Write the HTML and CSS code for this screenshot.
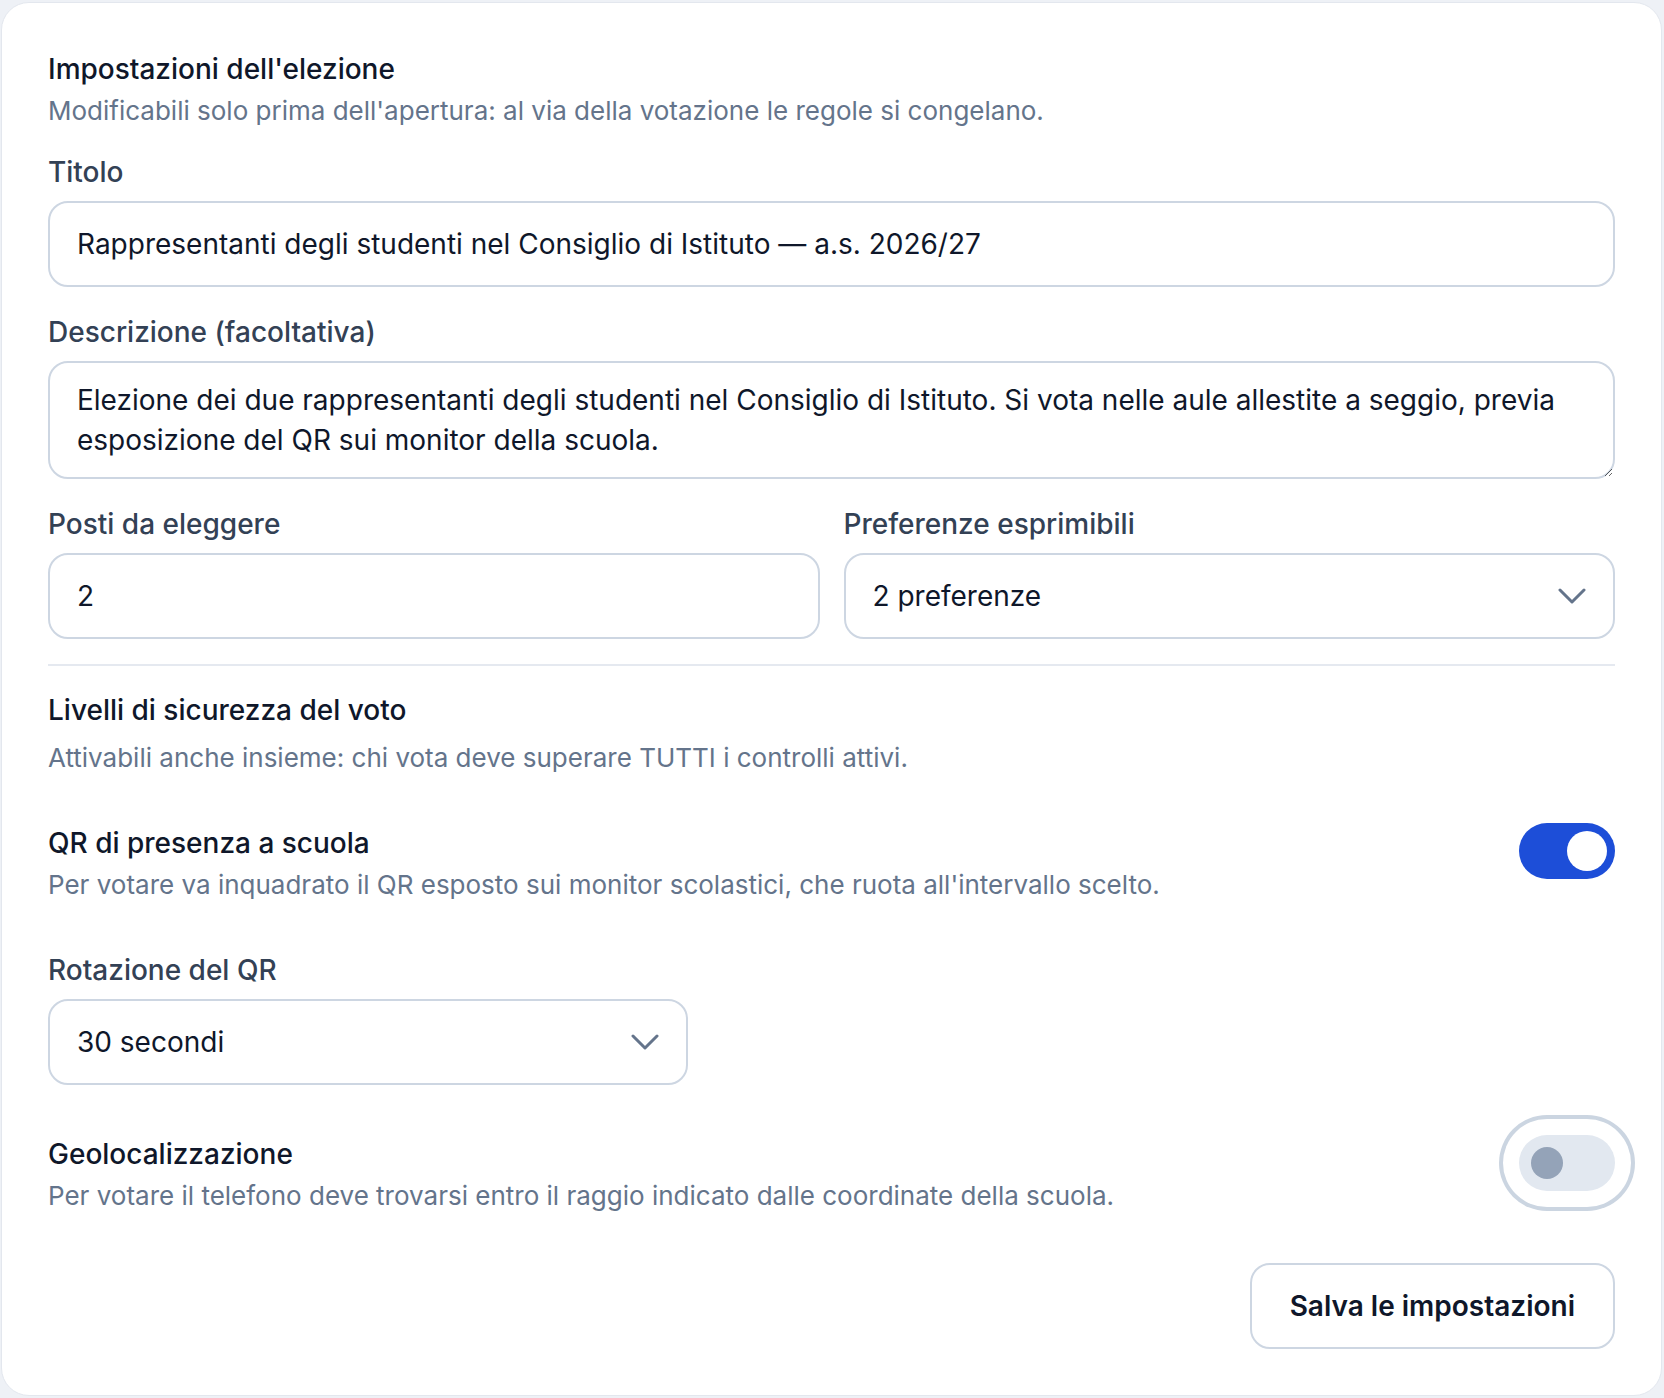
FILE: index.html
```html
<!DOCTYPE html>
<html lang="it">
<head>
<meta charset="utf-8">
<title>Impostazioni dell'elezione</title>
<link rel="stylesheet" href="styles.css">
</head>
<body>
<div class="card">
    <div class="intestazione">
        <h2>Impostazioni dell'elezione</h2>
        <p class="nota">Modificabili solo prima dell'apertura: al via della votazione le regole si congelano.</p>
    </div>

    <div class="campo">
        <label for="titolo">Titolo</label>
        <input id="titolo" class="controllo" type="text" value="Rappresentanti degli studenti nel Consiglio di Istituto — a.s. 2026/27">
    </div>

    <div class="campo">
        <label for="descrizione">Descrizione (facoltativa)</label>
        <textarea id="descrizione" class="controllo area">Elezione dei due rappresentanti degli studenti nel Consiglio di Istituto. Si vota nelle aule allestite a seggio, previa esposizione del QR sui monitor della scuola.</textarea>
    </div>

    <div class="riga">
        <div class="campo">
            <label for="posti">Posti da eleggere</label>
            <input id="posti" class="controllo" type="text" value="2">
        </div>
        <div class="campo">
            <label>Preferenze esprimibili</label>
            <div class="controllo select">
                <span>2 preferenze</span>
                <svg class="freccia" width="28" height="16" viewBox="0 0 28 16"><path d="M2 2 L14 14 L26 2"/></svg>
            </div>
        </div>
    </div>

    <hr class="divisore">

    <div class="intestazione">
        <h2>Livelli di sicurezza del voto</h2>
        <p class="nota spaziata">Attivabili anche insieme: chi vota deve superare TUTTI i controlli attivi.</p>
    </div>

    <div class="opzione">
        <div>
            <h3>QR di presenza a scuola</h3>
            <p class="nota">Per votare va inquadrato il QR esposto sui monitor scolastici, che ruota all'intervallo scelto.</p>
        </div>
        <span class="interruttore attivo"><span class="pomello"></span></span>
    </div>

    <div class="campo stretto">
        <label>Rotazione del QR</label>
        <div class="controllo select">
            <span>30 secondi</span>
            <svg class="freccia" width="28" height="16" viewBox="0 0 28 16"><path d="M2 2 L14 14 L26 2"/></svg>
        </div>
    </div>

    <div class="opzione geo">
        <div>
            <h3>Geolocalizzazione</h3>
            <p class="nota">Per votare il telefono deve trovarsi entro il raggio indicato dalle coordinate della scuola.</p>
        </div>
        <span class="interruttore spento"><span class="pomello"></span></span>
    </div>

    <div class="azioni">
        <button class="bottone" type="button">Salva le impostazioni</button>
    </div>
</div>
</body>
</html>
```

FILE: styles.css
```css
*{
    box-sizing: border-box;
}
body{
    margin: 0;
    padding: 2px 2px 2px 1px;
    background: #eef1f6;
    font-family: "Inter", "Noto Sans", sans-serif;
    color: #0f172a;
}
.card{
    background: #fff;
    border: 1px solid #e3e7ee;
    border-radius: 28px;
    padding: 46px;
}
h2, h3{
    margin: 0;
    font-size: 28px;
    line-height: 40px;
    font-weight: 500;
    color: #0f172a;
}
.nota{
    margin: 3px 0 0;
    font-size: 26px;
    line-height: 37px;
    color: #64748b;
}
.nota.spaziata{
    margin-top: 9px;
}
.intestazione{
    margin-bottom: 23px;
}
.campo + .campo{
    margin-top: 25px;
}
.campo label{
    display: block;
    font-size: 28px;
    line-height: 40px;
    font-weight: 500;
    color: #334155;
    margin-bottom: 9px;
}
.controllo{
    display: block;
    width: 100%;
    height: 86px;
    margin: 0;
    border: 2px solid #cdd6e2;
    border-radius: 20px;
    padding: 0 27px;
    background: #fff;
    font: 400 28px/40px "Inter", "Noto Sans", sans-serif;
    color: #0f172a;
    outline: none;
}
.area{
    height: 118px;
    padding-top: 17px;
    overflow: hidden;
}
.select{
    display: flex;
    align-items: center;
    justify-content: space-between;
}
.freccia path{
    fill: none;
    stroke: #64748b;
    stroke-width: 3;
    stroke-linecap: round;
    stroke-linejoin: round;
}
.riga{
    display: grid;
    grid-template-columns: 1fr 1fr;
    gap: 24px;
    margin-top: 25px;
}
.riga > .campo{
    margin-top: 0;
}
.divisore{
    border: 0;
    height: 2px;
    background: #e5e9f0;
    margin: 25px 0 24px;
}
.opzione{
    display: flex;
    justify-content: space-between;
    align-items: flex-start;
    gap: 32px;
    margin-top: 47px;
}
.opzione.geo{
    margin-top: 49px;
}
.campo.stretto{
    width: 640px;
    margin-top: 47px;
}
.interruttore{
    flex: none;
    display: flex;
    align-items: center;
    width: 96px;
    height: 56px;
    border-radius: 28px;
    padding: 0 8px;
    background: #e2e8f0;
}
.interruttore .pomello{
    width: 40px;
    height: 40px;
    border-radius: 50%;
    background: #fff;
}
.interruttore.attivo{
    background: #1d4ed8;
    justify-content: flex-end;
}
.interruttore.spento{
    padding: 0 12px;
    margin-top: 1px;
    box-shadow: 0 0 0 16px #fff, 0 0 0 20px #cbd5e1;
}
.interruttore.spento .pomello{
    width: 32px;
    height: 32px;
    background: #94a3b8;
}
.azioni{
    display: flex;
    justify-content: flex-end;
    margin-top: 49px;
}
.bottone{
    height: 86px;
    padding: 0 38px;
    border: 2px solid #cdd6e2;
    border-radius: 20px;
    background: #fff;
    font: 600 28px/40px "Inter", "Noto Sans", sans-serif;
    color: #0f172a;
}
```
